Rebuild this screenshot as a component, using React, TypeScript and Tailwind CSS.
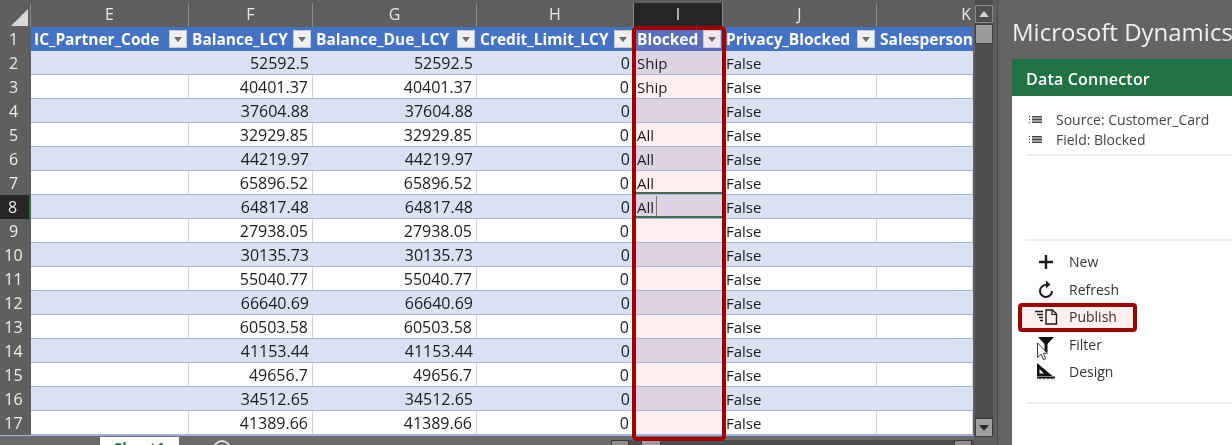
import React from "react";

const cols = [
  { l: "E", h: "IC_Partner_Code", w: 158 },
  { l: "F", h: "Balance_LCY", w: 124 },
  { l: "G", h: "Balance_Due_LCY", w: 164 },
  { l: "H", h: "Credit_Limit_LCY", w: 157 },
  { l: "I", h: "Blocked", w: 89 },
  { l: "J", h: "Privacy_Blocked", w: 154 },
  { l: "K", h: "Salesperson_", w: 96 },
];

const rows: [string, string, string][] = [
  ["52592.5", "52592.5", "Ship"],
  ["40401.37", "40401.37", "Ship"],
  ["37604.88", "37604.88", ""],
  ["32929.85", "32929.85", "All"],
  ["44219.97", "44219.97", "All"],
  ["65896.52", "65896.52", "All"],
  ["64817.48", "64817.48", "All"],
  ["27938.05", "27938.05", ""],
  ["30135.73", "30135.73", ""],
  ["55040.77", "55040.77", ""],
  ["66640.69", "66640.69", ""],
  ["60503.58", "60503.58", ""],
  ["41153.44", "41153.44", ""],
  ["49656.7", "49656.7", ""],
  ["34512.65", "34512.65", ""],
  ["41389.66", "41389.66", ""],
];

function FilterBtn({ tint }: { tint?: boolean }) {
  return (
    <span
      className={`absolute right-[2px] top-[3px] flex h-[18px] w-[18px] items-center justify-center border border-[#c8c8c8] ${
        tint ? "bg-[#f2e6ec]" : "bg-[#f0f0f0]"
      }`}
    >
      <svg width="8" height="5" viewBox="0 0 8 5">
        <path d="M0 0h8L4 5z" fill="#6a6a6a" />
      </svg>
    </span>
  );
}

function Cell({
  w,
  band,
  tint,
  right,
  children,
}: {
  w: number;
  band: boolean;
  tint?: boolean;
  right?: boolean;
  children?: React.ReactNode;
}) {
  const bg = tint ? (band ? "bg-[#ddd3e3]" : "bg-[#ffeeee]") : band ? "bg-[#d9e1f2]" : "bg-white";
  const line = band ? "" : "border-r border-r-[#d0d0d0]";
  return (
    <div
      style={{ width: w }}
      className={`relative h-full shrink-0 overflow-hidden whitespace-nowrap pl-[3px] ${bg} ${line} ${
        right ? "pr-[4px] text-right text-[16px]" : ""
      }`}
    >
      {children}
    </div>
  );
}

function Excel() {
  return (
    <div className="flex w-[974px] flex-col bg-[#5f5f5f]">
      <div className="flex h-[27px] pt-[3px]">
        <div className="relative h-[24px] w-[30px] shrink-0">
          <svg className="absolute left-[11px] top-[6px]" width="17" height="17" viewBox="0 0 17 17">
            <path d="M17 0v17H0z" fill="#d9d9d9" />
          </svg>
        </div>
        {cols.map((c) => (
          <div
            key={c.l}
            style={{ width: c.w }}
            className={`flex shrink-0 items-center border-l border-l-[#8a8a8a] pb-[2px] text-[16px] leading-none ${
              c.l === "I" ? "bg-[#262626] text-[#e8e8e8]" : "text-[#e8e8e8]"
            } ${c.l === "K" ? "justify-end pr-[1px]" : "justify-center"}`}
          >
            {c.l}
          </div>
        ))}
      </div>
      <div className="flex h-[24px]">
        <div className="flex w-[31px] shrink-0 items-center justify-center pr-[4px] text-[16px] text-[#ededed]">1</div>
        {cols.map((c) => (
          <div
            key={c.l}
            style={{ width: c.w }}
            className={`relative h-full shrink-0 overflow-hidden whitespace-nowrap px-[3px] pt-[2px] text-[15.5px] font-bold leading-[20px] text-white ${
              c.l === "I" ? "bg-[#5b70bd]" : "bg-[#4472c4]"
            }`}
          >
            {c.h}
            {c.l !== "K" && <FilterBtn tint={c.l === "I"} />}
          </div>
        ))}
      </div>
      {rows.map((r, i) => {
        const band = i % 2 === 0;
        const n = i + 2;
        return (
          <div key={n} className="flex h-[24px]">
            <div
              className={`flex w-[31px] shrink-0 items-center justify-center pr-[4px] text-[16px] ${
                n === 8 ? "border-r-2 border-r-[#217346] bg-[#262626] text-[#e8e8e8]" : "text-[#ededed]"
              }`}
            >
              {n}
            </div>
            <div className="flex h-full border-b border-b-[#a3b5da] text-[15px] leading-[24px] text-[#1c1c1c]">
              <Cell w={158} band={band} />
              <Cell w={124} band={band} right>
                {r[0]}
              </Cell>
              <Cell w={164} band={band} right>
                {r[1]}
              </Cell>
              <Cell w={157} band={band} right>
                0
              </Cell>
              <Cell w={89} band={band} tint>
                {r[2]}
                {n === 7 && <span className="absolute bottom-0 left-0 right-0 h-[2px] bg-[#3f6b4f]" />}
                {n === 8 && (
                  <>
                    <span className="absolute bottom-0 left-0 right-0 h-[2px] bg-[#3f6b4f]" />
                    <span className="absolute left-[22px] top-[1px] h-[21px] w-px bg-[#777777]" />
                  </>
                )}
              </Cell>
              <Cell w={154} band={band}>
                False
              </Cell>
              <Cell w={96} band={band} />
            </div>
          </div>
        );
      })}
      <div className="flex h-[10px] items-start overflow-hidden border-t border-t-[#a3b5da] bg-[#6a6a6a]">
        <div className="ml-[100px] mt-[1px] h-[12px] w-[79px] shrink-0 bg-white text-center text-[15px] font-bold leading-[20px] text-[#217346]">
          Sheet1
        </div>
        <div className="ml-[34px] mt-[4px] h-[18px] w-[18px] shrink-0 rounded-full border-2 border-[#e0e0e0]" />
        <div className="ml-[380px] mt-[4px] flex h-[10px] flex-1 items-start bg-[#4d4d4d]">
          <div className="h-[10px] w-[18px] border border-[#3a3a3a] bg-[#8c8c8c]" />
          <div className="ml-[12px] h-[10px] w-[20px] border border-[#3a3a3a] bg-[#9b9b9b]" />
          <div className="ml-auto mr-[2px] h-[10px] w-[18px] border border-[#3a3a3a] bg-[#8c8c8c]" />
        </div>
      </div>
    </div>
  );
}

function Scrollbar() {
  return (
    <div className="flex w-[24px] shrink-0 flex-col border-r border-r-[#4a4a4a] bg-[#5f5f5f] pl-[1px]">
      <div className="flex h-[418px] w-[18px] flex-col bg-[#4d4d4d] pt-[5px]">
        <div className="flex h-[18px] w-[18px] items-center justify-center border border-[#8a8a8a] bg-[#4f4f4f]">
          <svg width="10" height="6" viewBox="0 0 10 6">
            <path d="M5 0l5 6H0z" fill="#d0d0d0" />
          </svg>
        </div>
        <div className="mt-[1px] h-[20px] w-[18px] border border-[#3f3f3f] bg-[#9b9b9b]" />
      </div>
      <div className="flex h-[19px] w-[18px] items-center justify-center border border-[#3a3a3a] bg-[#a0a0a0]">
        <svg width="10" height="6" viewBox="0 0 10 6">
          <path d="M5 6L0 0h10z" fill="#2a2a2a" />
        </svg>
      </div>
    </div>
  );
}

function ListIcon() {
  return (
    <svg width="14" height="8" viewBox="0 0 14 8" className="shrink-0">
      <path d="M0 .5h1M0 3.5h1M0 6.5h1M3 .5h10M3 2h10M3 3.5h10M3 5h10M3 6.5h10" stroke="#444" strokeWidth="1" fill="none" />
    </svg>
  );
}

const stroke = "#1c1c1c";

function NewIcon() {
  return (
    <svg width="16" height="16" viewBox="0 0 16 16">
      <path d="M8 1v14M1 8h14" stroke={stroke} strokeWidth="2.4" />
    </svg>
  );
}
function RefreshIcon() {
  return (
    <svg width="16" height="18" viewBox="0 0 16 18">
      <path d="M8.5 5A6 6 0 1 0 14 11" stroke={stroke} strokeWidth="2" fill="none" />
      <path d="M8 0.5l4.5 4-4.5 4z" fill={stroke} />
    </svg>
  );
}
function PublishIcon() {
  return (
    <svg width="23" height="16" viewBox="0 0 23 16">
      <path d="M11 1h6.5L21.5 5v10H11z" stroke={stroke} strokeWidth="1.4" fill="none" />
      <path d="M17 1v4.5h4.5" stroke={stroke} strokeWidth="1.2" fill="none" />
      <path d="M0 2.5h8M2 5.5h6M4 8.5h4M5 11.5h3" stroke={stroke} strokeWidth="1.4" />
    </svg>
  );
}
function FilterIcon() {
  return (
    <svg width="16" height="16" viewBox="0 0 16 16">
      <path d="M0 1h16L9.5 8v8h-3V8z" fill="#111" />
    </svg>
  );
}
function DesignIcon() {
  return (
    <svg width="20" height="17" viewBox="0 0 20 17">
      <path d="M1 0v13H16.5zM3.5 6v4.5H8z" fill="#111" fillRule="evenodd" />
      <path d="M1 14.5h18" stroke="#111" strokeWidth="2" />
      <path d="M4 15.5v1M8 15.5v1M12 15.5v1M16 15.5v1" stroke="#111" />
    </svg>
  );
}

function Action({ icon, label }: { icon: React.ReactNode; label: string }) {
  return (
    <div className="flex h-[27.5px] items-center">
      <div className="flex w-[38px] shrink-0 justify-center pl-[2px]">{icon}</div>
      <span className="pl-[5px] text-[14px] text-[#333333]">{label}</span>
    </div>
  );
}

function Pane() {
  return (
    <div className="relative flex-1 overflow-hidden bg-[#646464] pl-[14px]">
      <div className="flex h-[59px] w-[300px] items-start whitespace-nowrap pt-[14px] text-[24px] leading-[36px] text-[#f0f0f0]">
        Microsoft Dynamics
      </div>
      <div className="h-[386px] w-[300px] bg-white">
        <div className="flex h-[37px] items-center bg-[#217346] pl-[14px] pt-[2px] text-[16px] font-semibold tracking-[0.2px] text-white">
          Data Connector
        </div>
        <div className="mx-[14px] h-[60px] border-b-2 border-b-[#ececec] pt-[14px] text-[14px] leading-[20px] text-[#444444]">
          <div className="flex items-center gap-[13px] pl-[3px]">
            <ListIcon />
            Source: Customer_Card
          </div>
          <div className="flex items-center gap-[13px] pl-[3px]">
            <ListIcon />
            Field: Blocked
          </div>
        </div>
        <div className="mx-[14px] mt-[83px] h-[165px] border-y-2 border-y-[#ececec] pt-[7px]">
          <Action icon={<NewIcon />} label="New" />
          <Action icon={<RefreshIcon />} label="Refresh" />
          <Action icon={<PublishIcon />} label="Publish" />
          <Action icon={<FilterIcon />} label="Filter" />
          <Action icon={<DesignIcon />} label="Design" />
        </div>
      </div>
      <div className="absolute left-[20px] top-[303px] h-[29px] w-[119px] rounded-[4px] border-[4px] border-[#a00000] bg-[#fff0ee] mix-blend-multiply" />
      <svg className="absolute left-[38px] top-[342px]" width="13" height="19" viewBox="0 0 13 21">
        <path d="M1 1v16l4-3.5 2.5 6 2.5-1-2.5-6H12z" fill="#fff" stroke="#222" strokeWidth="1" />
      </svg>
    </div>
  );
}

export default function App() {
  return (
    <div
      className="relative flex h-[445px] w-[1232px] overflow-hidden bg-[#5f5f5f]"
      style={{ fontFamily: '"Open Sans", "Noto Sans", sans-serif' }}
    >
      <Excel />
      <Scrollbar />
      <Pane />
      <div className="pointer-events-none absolute left-[632px] top-[26px] h-[415px] w-[94px] rounded-[5px] border-[4px] border-[#a00000]" />
    </div>
  );
}
